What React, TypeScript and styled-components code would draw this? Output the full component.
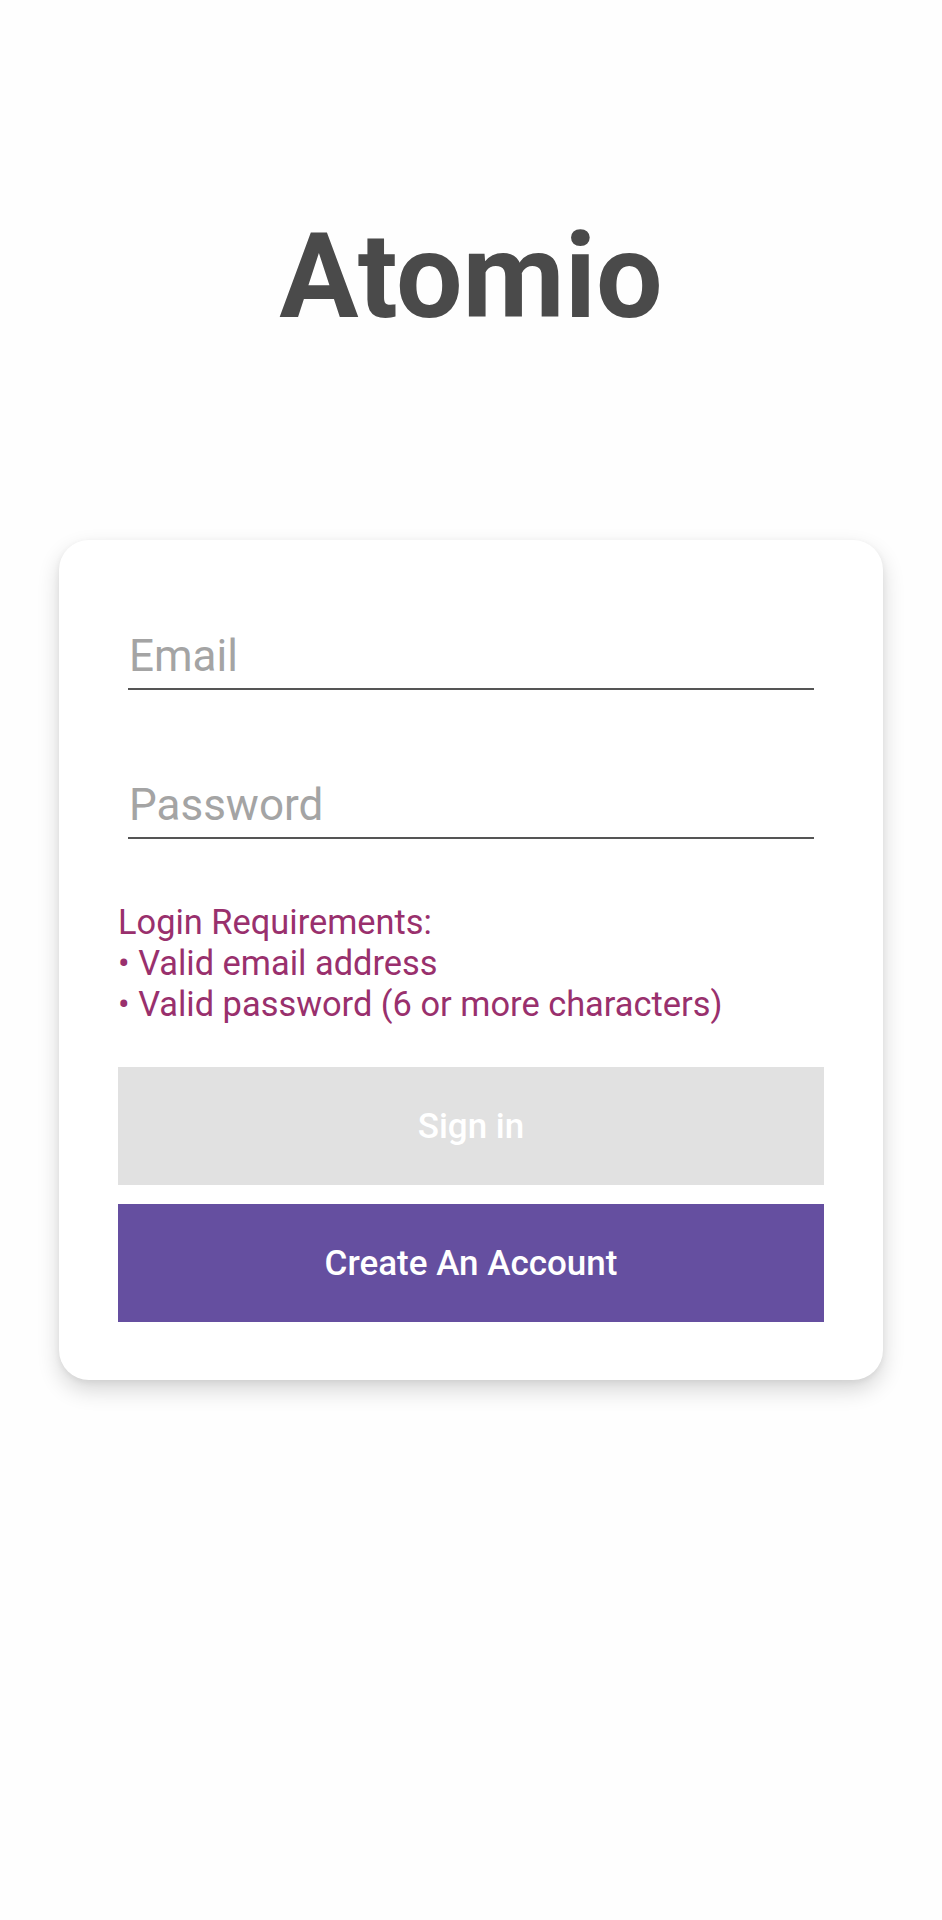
import React from "react";
import styled, { createGlobalStyle } from "styled-components";

const GlobalStyle = createGlobalStyle`
  html, body {
    margin: 0;
    padding: 0;
    background: #fefefe;
    font-family: Roboto, "Noto Sans", Arial, sans-serif;
  }
  * { box-sizing: border-box; }
`;

const Screen = styled.div`
  display: flex;
  flex-direction: column;
  align-items: center;
  min-height: 1920px;
  padding-top: 218px;
`;

const Title = styled.h1`
  margin: 0;
  font-size: 118px;
  line-height: 118px;
  font-weight: 700;
  color: #4a4a4a;
  text-align: center;
`;

const Card = styled.div`
  margin-top: 204px;
  width: 824px;
  background: #ffffff;
  border-radius: 30px;
  box-shadow: 0 10px 22px rgba(0, 0, 0, 0.16), 0 2px 6px rgba(0, 0, 0, 0.06);
  padding: 90px 59px 58px;
  display: flex;
  flex-direction: column;
`;

const Field = styled.input<{ $gapBelow?: number }>`
  display: block;
  margin: 0 10px ${(p) => p.$gapBelow ?? 0}px;
  width: calc(100% - 20px);
  height: 60px;
  padding: 0 1px 6px;
  border: none;
  border-bottom: 2px solid #555555;
  outline: none;
  background: transparent;
  font-family: Roboto, sans-serif;
  font-size: 44px;
  color: #333;
  &::placeholder {
    color: #a4a4a4;
  }
`;

const Requirements = styled.div`
  margin-top: 63px;
  font-size: 34.4px;
  line-height: 41px;
  color: #99306d;
`;

const Button = styled.button<{ $primary?: boolean }>`
  display: flex;
  align-items: center;
  justify-content: center;
  width: 100%;
  height: 118px;
  border: none;
  border-radius: 0;
  margin-top: ${(p) => (p.$primary ? 19 : 42)}px;
  background: ${(p) => (p.$primary ? "#654fa0" : "#e1e1e1")};
  color: #ffffff;
  font-family: Roboto, sans-serif;
  font-size: 35px;
  font-weight: 500;
  cursor: pointer;
`;

export default function App() {
  return (
    <>
      <GlobalStyle />
      <Screen>
        <Title>Atomio</Title>
        <Card>
          <Field type="email" placeholder="Email" $gapBelow={89} />
          <Field type="password" placeholder="Password" />
          <Requirements>
            Login Requirements:
            <br />• Valid email address
            <br />• Valid password (6 or more characters)
          </Requirements>
          <Button>Sign in</Button>
          <Button $primary>Create An Account</Button>
        </Card>
      </Screen>
    </>
  );
}
